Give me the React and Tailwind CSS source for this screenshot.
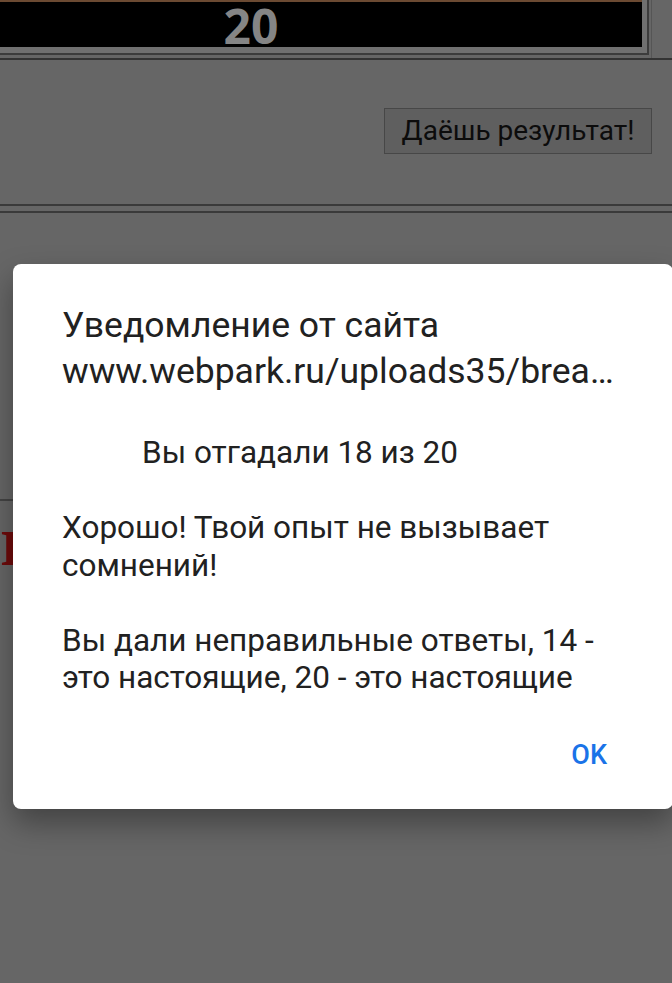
export default function App() {
    return (
        <div className="relative min-h-[983px] overflow-hidden bg-[#666666] font-['Roboto',sans-serif]">
            {/* page behind the alert, dimmed */}
            <div className="flex h-[60px] border-b-2 border-[#333333]">
                <div className="w-[649px] h-[55px] border-r-2 border-b-2 border-[#3c3c3c] bg-[#707070] pr-[5px] pb-[3px]">
                    <div className="h-[47px] bg-black border-t-2 border-[#6b4a32] flex items-end justify-center overflow-hidden">
                        <span className="mr-[140px] -mb-[4px] text-[48px] leading-[50px] font-bold text-[#858585] font-['Open_Sans',sans-serif]">20</span>
                    </div>
                </div>
                <div className="flex-1 border-l border-[#555555] ml-[2px]" />
            </div>
            <div className="h-[144px] flex justify-end items-start pt-[48px] pr-[20px]">
                <button className="h-[46px] w-[268px] border border-[#474747] bg-[#5f5f5f] text-[28px] text-[#0c0c0c]">
                    Даёшь результат!
                </button>
            </div>
            <div className="h-[9px] border-t-2 border-b-2 border-[#3a3a3a]" />
            <div className="h-[286px]" />
            <div className="border-t-2 border-[#444444] pt-[4px]">
                <div className="-ml-[40px] text-[72px] leading-[72px] font-bold text-[#6e0b0b] font-['Liberation_Serif',serif]">
                    url ссылки
                </div>
            </div>

            {/* alert dialog */}
            <div className="absolute left-[13px] top-[264px] w-[660px] h-[545px] rounded-[8px] bg-white shadow-[0_14px_30px_rgba(0,0,0,0.35)] pl-[49px] pr-[50px] pt-[38px] text-[#212121]">
                <div className="text-[35.5px] leading-[46px]">
                    <div>Уведомление от сайта</div>
                    <div className="truncate">www.webpark.ru/uploads35/breaking_bad_test.html</div>
                </div>
                <div className="mt-[40px] text-[31.5px] leading-[37.5px]">
                    <p className="pl-[80px]">Вы отгадали 18 из 20</p>
                    <p className="mt-[37.5px]">Хорошо! Твой опыт не вызывает сомнений!</p>
                    <p className="mt-[37.5px]">Вы дали неправильные ответы, 14 - это настоящие, 20 - это настоящие</p>
                </div>
                <div className="flex justify-end mt-[42px] pr-[16px]">
                    <button className="text-[27px] font-medium text-[#1a73e8] leading-[32px]">OK</button>
                </div>
            </div>
        </div>
    );
}
